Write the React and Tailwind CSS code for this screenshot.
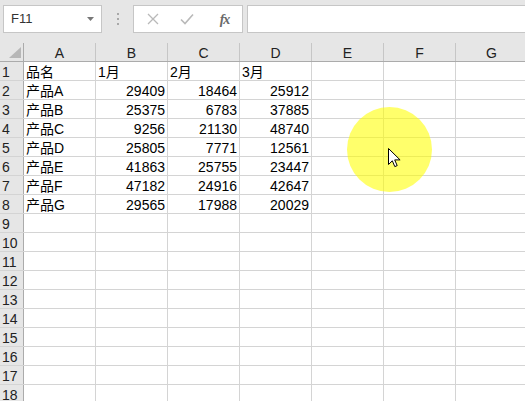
const cols = ['A', 'B', 'C', 'D', 'E', 'F', 'G'];

const data = [
  ['品名', '1月', '2月', '3月'],
  ['产品A', 29409, 18464, 25912],
  ['产品B', 25375, 6783, 37885],
  ['产品C', 9256, 21130, 48740],
  ['产品D', 25805, 7771, 12561],
  ['产品E', 41863, 25755, 23447],
  ['产品F', 47182, 24916, 42647],
  ['产品G', 29565, 17988, 20029],
];

const font = { fontFamily: '"Liberation Sans", "Noto Sans CJK SC", Arial, sans-serif' };

function Toolbar() {
  return (
    <div className="h-[43px] bg-[#e6e6e6] flex items-start pt-[5px] shrink-0">
      {/* Name box */}
      <div className="ml-[3px] w-[99px] h-[28px] bg-white border border-[#c6c6c6] flex items-center pl-[7px] pr-[7px] justify-between">
        <span className="text-[13px] text-[#333]">F11</span>
        <svg width="7" height="4" viewBox="0 0 7 4">
          <path d="M0 0h7L3.5 4z" fill="#777" />
        </svg>
      </div>
      {/* dots */}
      <div className="w-[31px] h-[28px] flex flex-col items-center justify-center gap-[3px]">
        <span className="block w-[2px] h-[2px] bg-[#a8a8a8]" />
        <span className="block w-[2px] h-[2px] bg-[#a8a8a8]" />
        <span className="block w-[2px] h-[2px] bg-[#a8a8a8]" />
      </div>
      {/* cancel / enter / fx */}
      <div className="w-[110px] h-[28px] bg-white border border-[#c6c6c6] flex items-center">
        <div className="w-[37px] flex justify-center">
          <svg width="12" height="12" viewBox="0 0 12 12">
            <path d="M1 1l10 10M11 1L1 11" stroke="#b9b9b9" strokeWidth="1.3" />
          </svg>
        </div>
        <div className="w-[32px] flex justify-center">
          <svg width="14" height="12" viewBox="0 0 14 12">
            <path d="M1 6.5l4 4L13 1.5" stroke="#b9b9b9" strokeWidth="1.6" fill="none" />
          </svg>
        </div>
        <div className="flex-1 flex justify-center pl-[4px]">
          <span
            className="italic text-[14px] text-[#6a6a6a] font-bold tracking-[-1px]"
            style={{ fontFamily: '"Liberation Serif", serif' }}
          >
            fx
          </span>
        </div>
      </div>
      {/* formula input */}
      <div className="ml-[4px] flex-1 h-[28px] bg-white border border-[#c6c6c6] border-r-0" />
    </div>
  );
}

function HeaderRow() {
  return (
    <div className="flex h-[19px] bg-[#e6e6e6] border-b border-[#ababab]">
      <div className="w-[24px] shrink-0 border-r border-[#ababab] relative">
        <svg className="absolute left-[9px] top-[4px]" width="12" height="11" viewBox="0 0 12 11">
          <path d="M12 0V11H0z" fill="#b7b7b7" />
        </svg>
      </div>
      {cols.map((c) => (
        <div
          key={c}
          className="w-[72px] shrink-0 border-r border-[#c6c6c6] flex items-end justify-center pb-[1px] text-[14px] leading-none text-[#222]"
        >
          {c}
        </div>
      ))}
    </div>
  );
}

function Row({ n, values }) {
  return (
    <div className="flex h-[19px] border-b border-[#d4d4d4]">
      <div className="w-[24px] shrink-0 bg-[#e6e6e6] border-r border-[#ababab] flex items-end pl-[2px] pb-[1px] text-[14px] leading-none text-[#222]">
        {n}
      </div>
      {cols.map((c, i) => {
        const v = values ? values[i] : undefined;
        const isNum = typeof v === 'number';
        return (
          <div
            key={c}
            className={`w-[72px] shrink-0 border-r border-[#d4d4d4] flex items-end pb-[1px] text-[14px] leading-none text-black whitespace-nowrap ${
              isNum ? 'justify-end pr-[2px]' : 'justify-start pl-[2px]'
            }`}
          >
            {v}
          </div>
        );
      })}
    </div>
  );
}

export default function App() {
  const rows = Array.from({ length: 18 }, (_, i) => i + 1);
  return (
    <div className="w-[525px] h-[401px] overflow-hidden bg-white relative flex flex-col" style={font}>
      <Toolbar />
      <div className="w-[560px]">
        <HeaderRow />
        {rows.map((n) => (
          <Row key={n} n={n} values={data[n - 1]} />
        ))}
      </div>

      {/* click highlight */}
      <div className="absolute left-[347px] top-[107px] w-[85px] h-[85px] rounded-full bg-[radial-gradient(circle,rgba(255,255,0,0.58)_0%,rgba(255,255,0,0.58)_86%,rgba(255,255,0,0.25)_94%,rgba(255,255,0,0)_100%)]" />

      {/* cursor */}
      <svg className="absolute left-[388px] top-[148px]" width="13" height="20" viewBox="0 0 13 20">
        <path
          d="M0.5 0.5V16.5L4.3 12.8L6.8 18.6L9.2 17.6L6.7 11.9H12.1Z"
          fill="#fff"
          stroke="#000"
          strokeWidth="1"
          strokeLinejoin="round"
        />
      </svg>
    </div>
  );
}
